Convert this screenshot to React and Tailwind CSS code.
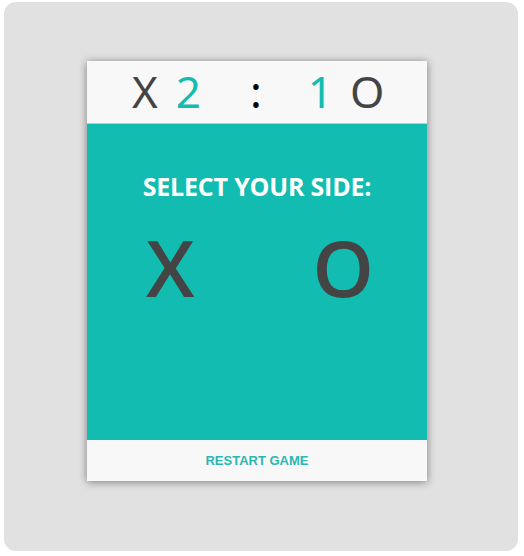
import React from 'react';

const App = () => {
  return (
    <div className="w-[524px] h-[556px] bg-white pt-[2px] pl-[4px]">
      <div className="w-[514px] h-[549px] rounded-[12px] bg-[#e1e1e1] pt-[59px] pl-[83px]">
        {/* Card */}
        <div className="w-[340px] bg-[#f8f8f8] shadow-[0_1px_8px_rgba(0,0,0,0.45)]">
          {/* Scoreboard */}
          <div className="h-[63px] border-b border-[#c8c8c8] flex items-center pl-[45px] pb-[2px] font-['Noto_Sans',sans-serif] font-normal text-[44px] leading-none">
            <span className="text-[#444]">X</span>
            <span className="text-[#12bcb1] ml-[18px]">2</span>
            <span className="text-black ml-[49px]">:</span>
            <span className="text-[#12bcb1] ml-[46px]">1</span>
            <span className="text-[#444] ml-[17px]">O</span>
          </div>

          {/* Side selection */}
          <div className="h-[316px] bg-[#12bcb1] flex flex-col items-center pt-[50px]">
            <h2 className="font-['Open_Sans',sans-serif] font-bold text-white text-[25px] leading-none tracking-[-0.2px]">
              SELECT YOUR SIDE:
            </h2>
            <div className="flex justify-between w-[228px] ml-[6px] mt-[29px] font-['Open_Sans',sans-serif] font-semibold text-[#444] text-[78px] leading-none">
              <button className="cursor-pointer">X</button>
              <button className="cursor-pointer">O</button>
            </div>
          </div>

          {/* Footer */}
          <div className="h-[41px] flex items-center justify-center">
            <button className="font-['Liberation_Sans',Arial,sans-serif] font-bold text-[13px] text-[#2ab7b0] cursor-pointer">
              RESTART GAME
            </button>
          </div>
        </div>
      </div>
    </div>
  );
};

export default App;
